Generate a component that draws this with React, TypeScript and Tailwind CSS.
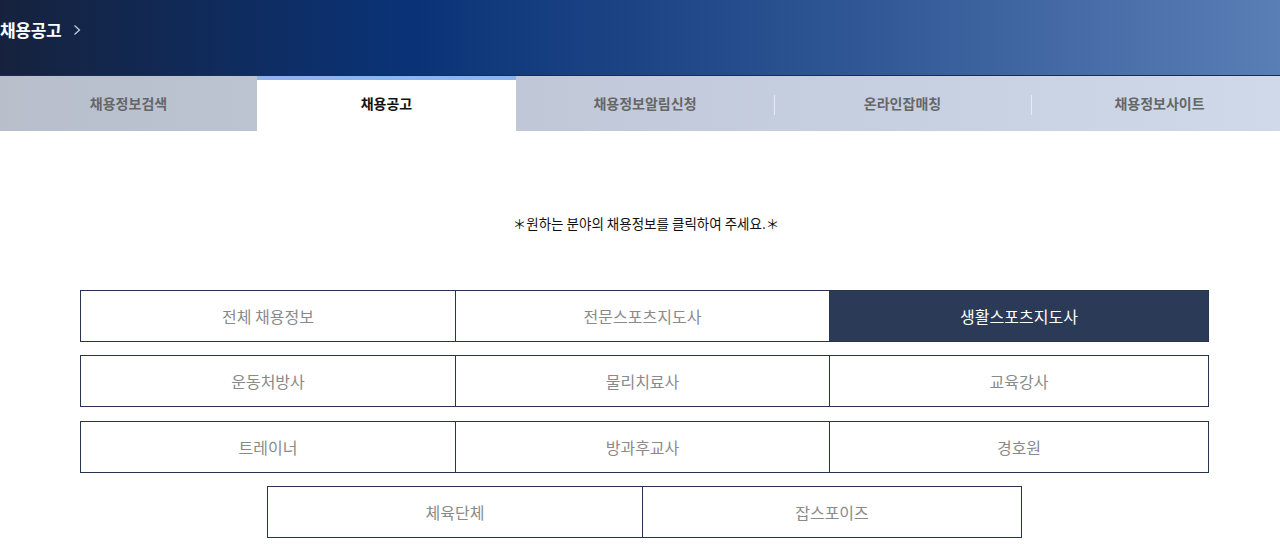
import React from "react";

const font = { fontFamily: '"Noto Sans CJK KR", "Noto Sans", sans-serif' };

const tabs = ["채용정보검색", "채용공고", "채용정보알림신청", "온라인잡매칭", "채용정보사이트"];

function Cell({ label, active, first }: { label: string; active?: boolean; first?: boolean }) {
  return (
    <div
      className={
        "h-[52px] flex items-center justify-center border border-[#26344f] text-[16px] " +
        (first ? "" : "border-l-0 ") +
        (active ? "bg-[#2b3a56] text-white" : "bg-white text-[#8a8a8a]")
      }
    >
      {label}
    </div>
  );
}

export default function App() {
  const rows = [
    ["전체 채용정보", "전문스포츠지도사", "생활스포츠지도사"],
    ["운동처방사", "물리치료사", "교육강사"],
    ["트레이너", "방과후교사", "경호원"],
  ];
  return (
    <div style={font} className="w-[1280px] bg-white min-h-[551px] overflow-hidden">
      <div className="h-[76px] bg-[linear-gradient(90deg,#16223d_0%,#0a3377_32%,#2a5190_62%,#5a7eb6_100%)] border-b border-[#1a2c52] flex items-start">
        <div className="flex items-center h-[60px] text-white">
          <span className="text-[17px] font-bold tracking-[-0.3px]">채용공고</span>
          <svg className="ml-[12px]" width="8" height="12" viewBox="0 0 8 12">
            <path d="M1.5 1.5 L6.5 6 L1.5 10.5" fill="none" stroke="#c8d2e4" strokeWidth="1.2" />
          </svg>
        </div>
      </div>
      <div className="h-[55px] w-[1288px] grid grid-cols-[257px_259px_258px_257px_257px] bg-[linear-gradient(90deg,#b8bfcb_0%,#c2cadb_50%,#cfd9ea_100%)]">
        {tabs.map((t, i) => {
          const active = i === 1;
          return (
            <div
              key={t}
              className={
                "relative flex items-center justify-center text-[14px] font-bold " +
                (active ? "bg-white text-[#111] border-t-[4px] border-[#8fb3ec]" : "text-[#666]")
              }
            >
              {!active && i > 2 && (
                <span className="absolute left-0 top-[19px] h-[20px] w-px bg-[#e6ebf3]" />
              )}
              <span className={active ? "-mt-[4px]" : ""}>{t}</span>
            </div>
          );
        })}
      </div>
      <div className="pt-[82px] pl-[12px] text-center text-[13.5px] text-[#111] leading-[20px]">
        ＊원하는 분야의 채용정보를 클릭하여 주세요.＊
      </div>
      <div className="mt-[57px] ml-[80px] w-[1129px] flex flex-col pb-[12px]">
        {rows.map((r, ri) => (
          <div
            key={ri}
            className={
              "grid grid-cols-[376px_374px_379px] " +
              (ri === 1 ? "mt-[13px]" : ri === 2 ? "mt-[14px]" : "")
            }
          >
            {r.map((c, ci) => (
              <Cell key={c} label={c} first={ci === 0} active={ri === 0 && ci === 2} />
            ))}
          </div>
        ))}
        <div className="mt-[13px] ml-[187px] w-[755px] grid grid-cols-[376px_379px]">
          <Cell label="체육단체" first />
          <Cell label="잡스포이즈" />
        </div>
      </div>
    </div>
  );
}
